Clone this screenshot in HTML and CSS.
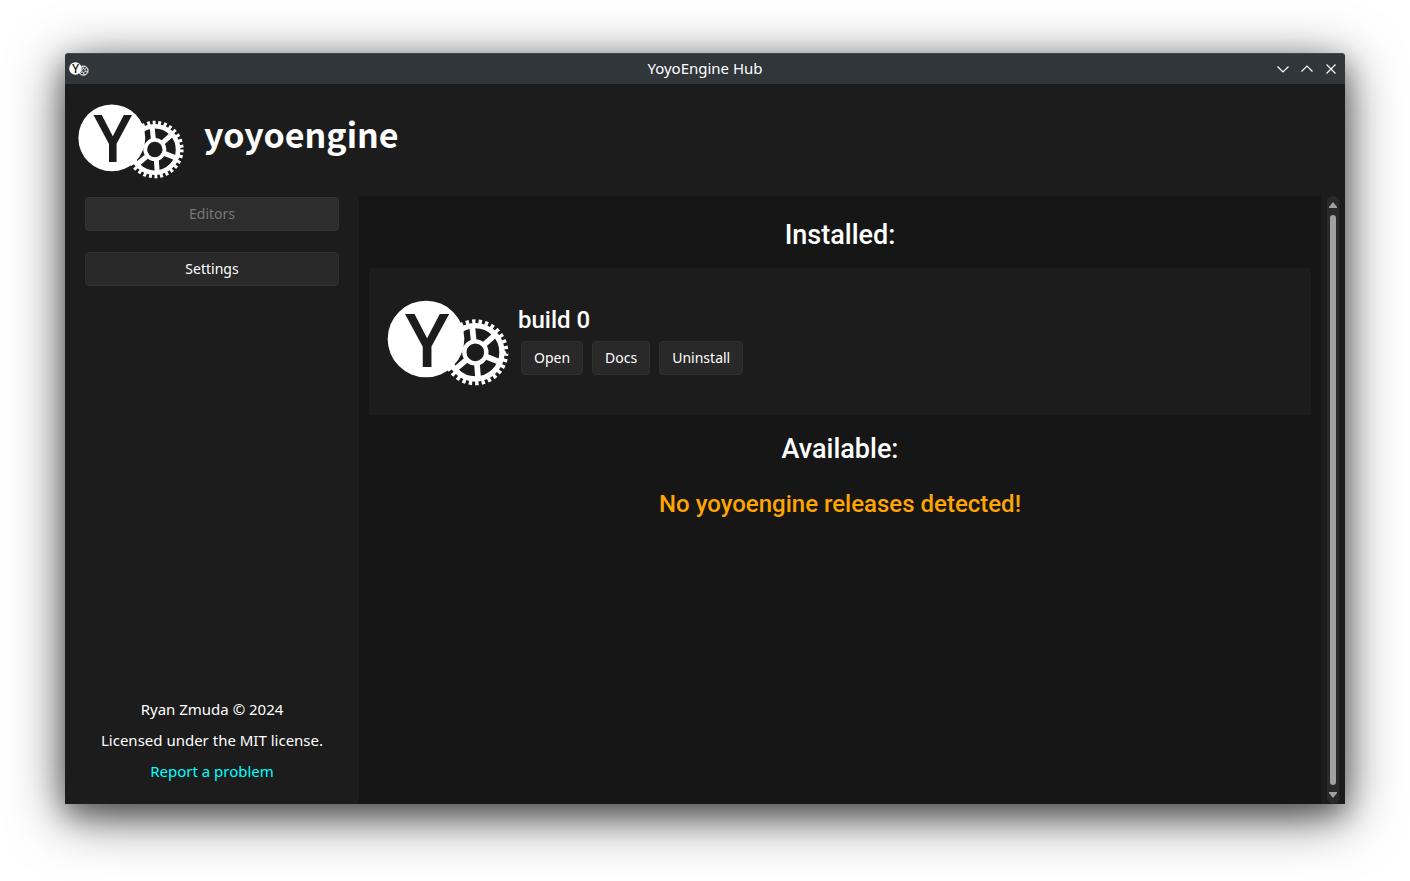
FILE: index.html
```html
<!DOCTYPE html>
<html lang="en">
<head>
<meta charset="utf-8">
<title>YoyoEngine Hub</title>
<link rel="stylesheet" href="styles.css">
</head>
<body>
<svg class="defs" width="0" height="0" aria-hidden="true">
  <defs>
    <g id="logo-mark">
      <g fill="none" stroke="#fff">
        <circle cx="286" cy="188" r="80" stroke-width="16"/>
        <circle cx="286" cy="188" r="92" stroke-width="14" pathLength="60" stroke-dasharray="1.05 0.95"/>
        <circle cx="286" cy="188" r="33" stroke-width="13"/>
        <g stroke-width="17">
          <path d="M321 202 L356 216"/>
          <path d="M291 223 L294 263"/>
          <path d="M259 211 L228 237"/>
          <path d="M249 180 L215 168"/>
          <path d="M281 153 L277 113"/>
          <path d="M313 164 L343 138"/>
        </g>
      </g>
      <circle cx="138" cy="148" r="115" fill="#fff"/>
    </g>
  </defs>
</svg>
<div class="window">
  <div class="titlebar">
    <svg class="app-icon" viewBox="22 28 364 258" aria-hidden="true"><use href="#logo-mark"/><text class="logo-letter" x="141" y="232" text-anchor="middle">Y</text></svg>
    <span class="window-title">YoyoEngine Hub</span>
    <div class="window-controls">
      <button type="button" aria-label="Minimize"><svg viewBox="0 0 16 16"><path d="M2.500 5.500 8 11l5.500-5.500"/></svg></button>
      <button type="button" aria-label="Maximize"><svg viewBox="0 0 16 16"><path d="M2.500 10.500 8 5l5.500 5.500"/></svg></button>
      <button type="button" aria-label="Close"><svg viewBox="0 0 16 16"><path d="m3.500 3.500 9 9m0-9-9 9"/></svg></button>
    </div>
  </div>
  <header class="brand">
    <svg class="brand-logo" viewBox="22 28 364 258" aria-hidden="true"><use href="#logo-mark"/><text class="logo-letter" x="141" y="232" text-anchor="middle">Y</text></svg>
    <span class="brand-name">yoyoengine</span>
  </header>
  <div class="body">
    <aside class="sidebar">
      <nav class="nav">
        <button type="button" class="btn" disabled>Editors</button>
        <button type="button" class="btn">Settings</button>
      </nav>
      <footer class="credits">
        <span>Ryan Zmuda © 2024</span>
        <span>Licensed under the MIT license.</span>
        <a href="#">Report a problem</a>
      </footer>
    </aside>
    <main class="content">
      <h1 class="heading">Installed:</h1>
      <article class="card">
        <svg class="card-logo" viewBox="22 28 364 258" aria-hidden="true"><use href="#logo-mark"/><text class="logo-letter" x="141" y="232" text-anchor="middle">Y</text></svg>
        <div class="card-info">
          <h2 class="card-title">build 0</h2>
          <div class="actions">
            <button type="button" class="btn">Open</button>
            <button type="button" class="btn">Docs</button>
            <button type="button" class="btn">Uninstall</button>
          </div>
        </div>
      </article>
      <h1 class="heading available">Available:</h1>
      <p class="warning">No yoyoengine releases detected!</p>
    </main>
    <div class="scrollbar" aria-hidden="true">
      <svg class="arrow" viewBox="0 0 8 6"><path d="M4 0 8 5v1H0V5z"/></svg>
      <div class="thumb"></div>
      <svg class="arrow" viewBox="0 0 8 6"><path d="M4 6 8 1V0H0v1z"/></svg>
    </div>
  </div>
</div>
</body>
</html>
```
FILE: styles.css
```css
* { box-sizing: border-box; }

body {
  margin: 0;
  min-height: 100vh;
  padding: 53px 65px 77px;
  display: flex;
  background: #fff;
  color: #fff;
  font: 15px/21px "Noto Sans", sans-serif;
}

.defs { position: absolute; }
.logo-letter { font: 600 224px "Open Sans", sans-serif; fill: #1c1c1c; }
.app-icon, .brand-logo, .card-logo { overflow: visible; }

.window {
  flex: 1;
  display: flex;
  flex-direction: column;
  background: #1c1c1c;
  border-radius: 4px 4px 0 0;
  box-shadow: 0 12px 56px rgba(0, 0, 0, 0.6), 0 10px 28px rgba(0, 0, 0, 0.4);
}

.titlebar {
  display: grid;
  grid-template-columns: 1fr auto 1fr;
  align-items: center;
  height: 31px;
  padding: 0 4px 1px;
  background: #31363b;
  border-top: 1px solid #41474d;
  border-radius: 4px 4px 0 0;
}
.app-icon { width: 20px; height: 14px; }
.window-controls { display: flex; justify-content: flex-end; gap: 8px; padding-right: 2px; }
.window-controls button {
  width: 16px;
  height: 16px;
  padding: 0;
  border: 0;
  background: none;
}
.window-controls svg {
  display: block;
  fill: none;
  stroke: #fcfcfc;
  stroke-width: 1.2;
}

.brand {
  display: flex;
  align-items: center;
  gap: 20px;
  height: 112px;
  padding: 0 13px;
}
.brand-logo { width: 106px; height: 75px; }
.brand-name { font: 700 34px/52px "Noto Sans CJK SC", sans-serif; padding-bottom: 12px; }

.body { flex: 1; display: flex; }

.sidebar {
  width: 294px;
  padding: 1px 20px 22px;
  display: flex;
  flex-direction: column;
  justify-content: space-between;
}
.nav { display: flex; flex-direction: column; gap: 21px; }
.credits {
  display: flex;
  flex-direction: column;
  align-items: center;
  gap: 10px;
}
.credits a { color: #00ffff; text-decoration: none; }

.btn {
  height: 34px;
  padding: 0 12px;
  border: 1px solid #303030;
  border-radius: 4px;
  background: #292929;
  color: #fff;
  font: 14px/20px "Noto Sans", sans-serif;
}
.btn:disabled { background: #2d2d2d; border-color: #333; color: #777; }

.content {
  flex: 1;
  padding: 23px 10px;
  background: #161616;
  font-family: Roboto, sans-serif;
}
.heading { margin: 0; font-size: 27px; font-weight: 500; line-height: 32px; text-align: center; }
.available { margin-top: 18px; }
.card {
  display: flex;
  align-items: center;
  gap: 9px;
  height: 147px;
  margin-top: 17px;
  padding: 0 18px;
  background: #1c1c1c;
}
.card-logo { width: 122px; height: 86px; }
.card-info { padding-bottom: 2px; }
.card-title { margin: 0; font-size: 24px; font-weight: 500; line-height: 28px; }
.actions { display: flex; gap: 9px; padding: 7px 3px 0; }
.warning {
  margin: 25px 0 0;
  color: #ffa500;
  font-size: 24px;
  font-weight: 500;
  line-height: 28px;
  text-align: center;
}

.scrollbar {
  width: 12px;
  margin: 0 6px;
  padding: 6px 2px;
  display: flex;
  flex-direction: column;
  align-items: center;
  gap: 7px;
  border-radius: 6px;
  background: #292929;
}
.arrow { width: 8px; height: 6px; fill: #a0a0a0; }
.thumb { flex: 1; width: 6px; border-radius: 3px; background: #a0a0a0; }
```
